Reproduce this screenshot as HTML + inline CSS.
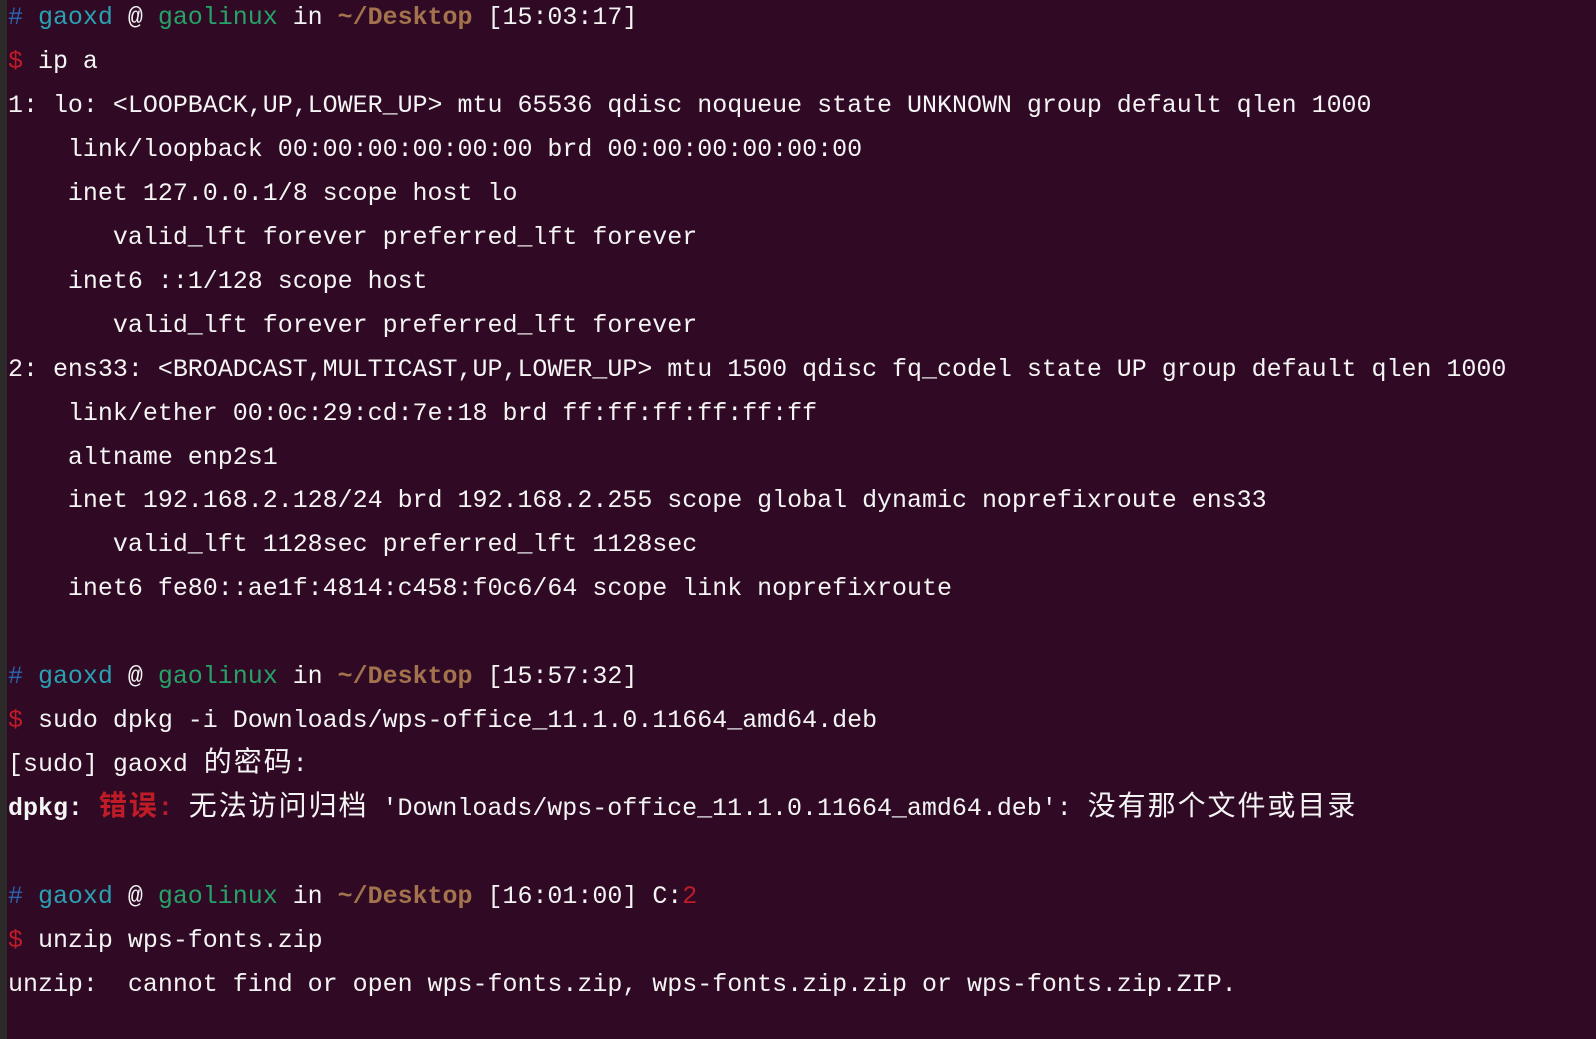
<!DOCTYPE html>
<html><head><meta charset="utf-8"><style>
html,body{margin:0;padding:0;width:1596px;height:1039px;overflow:hidden;background:#300a24;}
#strip{position:absolute;left:0;top:0;width:7px;height:1039px;background:#2c2a28;}
pre{position:absolute;left:8px;top:-3px;margin:0;font-family:"Liberation Mono","Noto Sans CJK SC",monospace;font-size:24.97px;line-height:43.95px;color:#f4f4f4;white-space:pre;}
.h{color:#2a64b0}.u{color:#2aa1b3}.g{color:#26a269}.d{color:#a2734c;font-weight:bold}.r{color:#c01c28}
.b{font-weight:bold}
.w{display:inline-block;width:29.96px;text-align:center;font-family:"Noto Sans CJK SC",sans-serif;line-height:1}
.w i{font-style:normal;font-size:1.12em}
</style></head><body><div id="strip"></div><pre><span class="h">#</span> <span class="u">gaoxd</span> @ <span class="g">gaolinux</span> in <span class="d">~/Desktop</span> [15:03:17]
<span class="r">$</span> ip a
1: lo: &lt;LOOPBACK,UP,LOWER_UP&gt; mtu 65536 qdisc noqueue state UNKNOWN group default qlen 1000
    link/loopback 00:00:00:00:00:00 brd 00:00:00:00:00:00
    inet 127.0.0.1/8 scope host lo
       valid_lft forever preferred_lft forever
    inet6 ::1/128 scope host
       valid_lft forever preferred_lft forever
2: ens33: &lt;BROADCAST,MULTICAST,UP,LOWER_UP&gt; mtu 1500 qdisc fq_codel state UP group default qlen 1000
    link/ether 00:0c:29:cd:7e:18 brd ff:ff:ff:ff:ff:ff
    altname enp2s1
    inet 192.168.2.128/24 brd 192.168.2.255 scope global dynamic noprefixroute ens33
       valid_lft 1128sec preferred_lft 1128sec
    inet6 fe80::ae1f:4814:c458:f0c6/64 scope link noprefixroute

<span class="h">#</span> <span class="u">gaoxd</span> @ <span class="g">gaolinux</span> in <span class="d">~/Desktop</span> [15:57:32]
<span class="r">$</span> sudo dpkg -i Downloads/wps-office_11.1.0.11664_amd64.deb
[sudo] gaoxd <span class="w"><i>的</i></span><span class="w"><i>密</i></span><span class="w"><i>码</i></span>:
<span class="b">dpkg: </span><span class="r b"><span class="w"><i>错</i></span><span class="w"><i>误</i></span>:</span> <span class="w"><i>无</i></span><span class="w"><i>法</i></span><span class="w"><i>访</i></span><span class="w"><i>问</i></span><span class="w"><i>归</i></span><span class="w"><i>档</i></span> 'Downloads/wps-office_11.1.0.11664_amd64.deb': <span class="w"><i>没</i></span><span class="w"><i>有</i></span><span class="w"><i>那</i></span><span class="w"><i>个</i></span><span class="w"><i>文</i></span><span class="w"><i>件</i></span><span class="w"><i>或</i></span><span class="w"><i>目</i></span><span class="w"><i>录</i></span>

<span class="h">#</span> <span class="u">gaoxd</span> @ <span class="g">gaolinux</span> in <span class="d">~/Desktop</span> [16:01:00] C:<span class="r">2</span>
<span class="r">$</span> unzip wps-fonts.zip
unzip:  cannot find or open wps-fonts.zip, wps-fonts.zip.zip or wps-fonts.zip.ZIP.
</pre></body></html>
